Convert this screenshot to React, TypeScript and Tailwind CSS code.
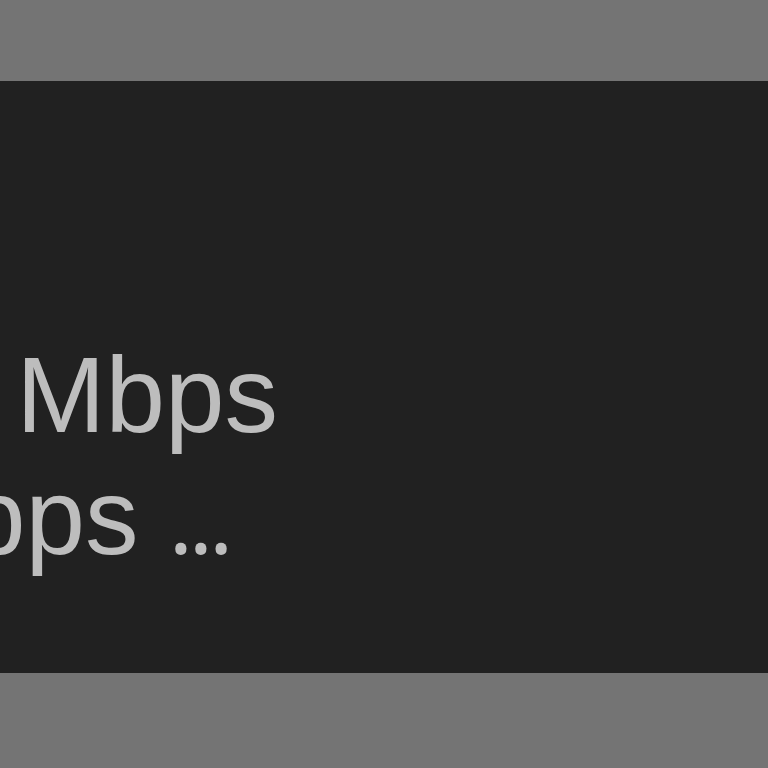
export default function App() {
  return (
    <div className="w-[768px] h-[768px] flex flex-col bg-[#747474] overflow-hidden" style={{ fontFamily: '"Liberation Sans", Arial, sans-serif' }}>
      <div className="h-[81px] shrink-0" />
      <div className="h-[592px] shrink-0 bg-[#212121] overflow-hidden flex flex-col pt-[254px]">
        <div className="whitespace-nowrap text-[107px] leading-[121px] text-[#bdbdbd] ml-[-192px]">100 Mbps</div>
        <div className="whitespace-nowrap text-[107px] leading-[121px] text-[#bdbdbd] ml-[-272px]">
          10 Mbps <span className="tracking-[-5px] text-[96px] font-['Open_Sans',sans-serif]">...</span>
        </div>
      </div>
      <div className="flex-1" />
    </div>
  );
}
